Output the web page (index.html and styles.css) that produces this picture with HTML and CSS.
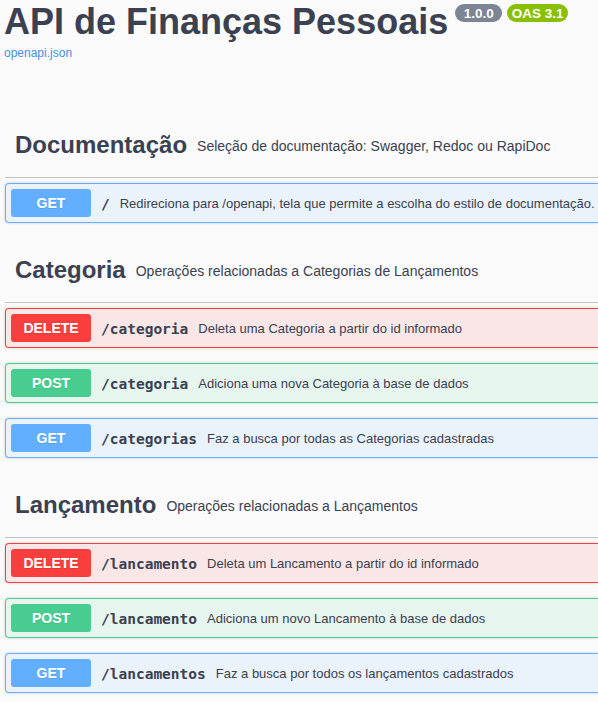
FILE: index.html
```html
<!DOCTYPE html>
<html lang="pt-BR">
<head>
<meta charset="utf-8">
<title>API de Finanças Pessoais</title>
<link rel="stylesheet" href="styles.css">
</head>
<body>
<div class="info">
  <div class="title-row">
    <h2 class="title">API de Finanças Pessoais</h2>
    <span class="badge badge-version">1.0.0</span>
    <span class="badge badge-oas">OAS 3.1</span>
  </div>
  <a class="link" href="#">openapi.json</a>
</div>

<div class="wrapper">
  <section class="tag-section">
    <h3 class="tag"><span class="tag-name">Documentação</span><small class="tag-desc">Seleção de documentação: Swagger, Redoc ou RapiDoc</small></h3>
    <div class="opblock get">
      <span class="method">GET</span>
      <span class="path">/</span>
      <span class="desc">Redireciona para /openapi, tela que permite a escolha do estilo de documentação.</span>
    </div>
  </section>

  <section class="tag-section">
    <h3 class="tag"><span class="tag-name">Categoria</span><small class="tag-desc">Operações relacionadas a Categorias de Lançamentos</small></h3>
    <div class="opblock delete">
      <span class="method">DELETE</span>
      <span class="path">/categoria</span>
      <span class="desc">Deleta uma Categoria a partir do id informado</span>
    </div>
    <div class="opblock post">
      <span class="method">POST</span>
      <span class="path">/categoria</span>
      <span class="desc">Adiciona uma nova Categoria à base de dados</span>
    </div>
    <div class="opblock get">
      <span class="method">GET</span>
      <span class="path">/categorias</span>
      <span class="desc">Faz a busca por todas as Categorias cadastradas</span>
    </div>
  </section>

  <section class="tag-section">
    <h3 class="tag"><span class="tag-name">Lançamento</span><small class="tag-desc">Operações relacionadas a Lançamentos</small></h3>
    <div class="opblock delete">
      <span class="method">DELETE</span>
      <span class="path">/lancamento</span>
      <span class="desc">Deleta um Lancamento a partir do id informado</span>
    </div>
    <div class="opblock post">
      <span class="method">POST</span>
      <span class="path">/lancamento</span>
      <span class="desc">Adiciona um novo Lancamento à base de dados</span>
    </div>
    <div class="opblock get">
      <span class="method">GET</span>
      <span class="path">/lancamentos</span>
      <span class="desc">Faz a busca por todos os lançamentos cadastrados</span>
    </div>
  </section>
</div>
</body>
</html>
```

FILE: styles.css
```css
html, body {
  margin: 0;
  padding: 0;
}

body {
  background: #fafafa;
  font-family: "Liberation Sans", Arial, sans-serif;
  color: #3b4151;
  overflow: hidden;
  width: 598px;
  height: 702px;
}

.info {
  padding: 1px 0 0 4px;
  height: 113px;
  box-sizing: border-box;
}

.title-row {
  display: flex;
  align-items: flex-start;
}

.title {
  margin: 0;
  font-size: 36px;
  line-height: 41px;
  font-weight: bold;
  color: #3b4151;
  white-space: nowrap;
}

.badge {
  display: inline-flex;
  align-items: center;
  justify-content: center;
  height: 18px;
  margin-top: 3px;
  border-radius: 57px;
  color: #fff;
  font-size: 13.5px;
  font-weight: bold;
  box-sizing: border-box;
}

.badge-version {
  background: #7d8492;
  width: 47px;
  margin-left: 7px;
}

.badge-oas {
  background: #89bf04;
  width: 61px;
  margin-left: 5px;
}

.link {
  display: block;
  margin-top: 4px;
  font-size: 12px;
  line-height: 14px;
  color: #4990e2;
  text-decoration: none;
}

.wrapper {
  margin-left: 5px;
  width: 593px;
}

.tag {
  margin: 0 0 5px;
  height: 64px;
  padding: 0 10px;
  display: flex;
  align-items: center;
  border-bottom: 1px solid rgba(59, 65, 81, 0.3);
  font-weight: normal;
  white-space: nowrap;
}

.tag-name {
  font-size: 24px;
  font-weight: bold;
  color: #3b4151;
}

.tag-desc {
  font-size: 14px;
  padding-left: 10px;
  color: #3b4151;
  margin-top: 2px;
}

.opblock {
  display: flex;
  align-items: center;
  height: 40px;
  box-sizing: border-box;
  padding: 0 5px;
  margin-bottom: 15px;
  border: 1px solid;
  border-right: 0;
  border-radius: 4px 0 0 4px;
  box-shadow: 0 0 3px rgba(0, 0, 0, 0.19);
  white-space: nowrap;
  overflow: hidden;
}

.method {
  width: 80px;
  height: 28px;
  display: flex;
  align-items: center;
  justify-content: center;
  border-radius: 3px;
  color: #fff;
  font-size: 14px;
  font-weight: bold;
  text-shadow: 0 1px 0 rgba(0, 0, 0, 0.1);
  flex: none;
}

.path {
  padding: 0 10px;
  font-family: "DejaVu Sans Mono", "Liberation Mono", monospace;
  font-size: 14.5px;
  font-weight: bold;
  color: #3b4151;
  margin-top: 2px;
}

.desc {
  font-size: 13px;
  color: #3b4151;
}

.get {
  background: rgba(97, 175, 254, 0.1);
  border-color: #61affe;
}
.get .method { background: #61affe; }

.post {
  background: rgba(73, 204, 144, 0.1);
  border-color: #49cc90;
}
.post .method { background: #49cc90; }

.delete {
  background: rgba(249, 62, 62, 0.1);
  border-color: #f93e3e;
}
.delete .method { background: #f93e3e; }
```
